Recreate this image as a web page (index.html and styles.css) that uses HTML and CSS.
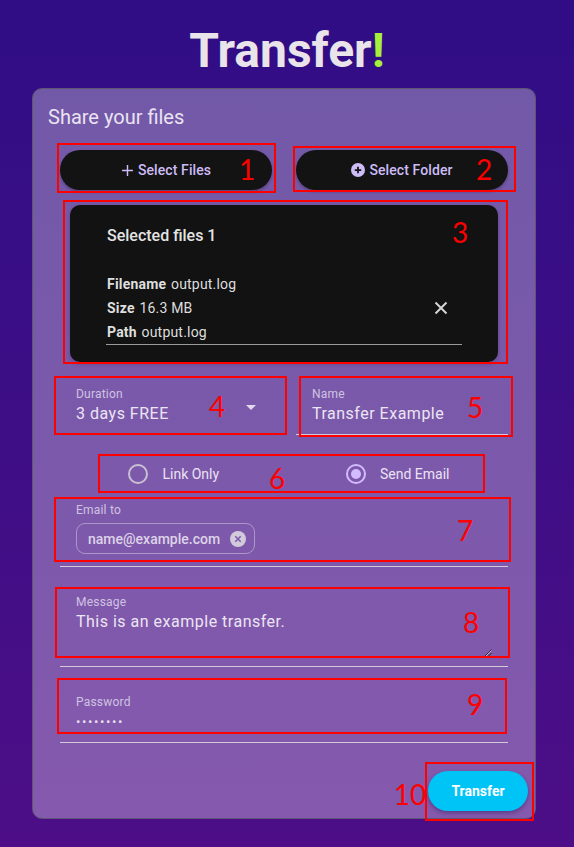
FILE: index.html
```html
<!DOCTYPE html>
<html lang="en">
<head>
<meta charset="utf-8">
<title>Transfer!</title>
<link rel="stylesheet" href="styles.css">
</head>
<body>
<h1 class="title">Transfer<span class="bang">!</span></h1>
<main class="card">
  <h2 class="card-title">Share your files</h2>
  <div class="content">
    <div class="btn-row">
      <button class="pill">
        <svg class="pill-icon" viewBox="0 0 24 24" width="13" height="13"><path d="M12 2v20M2 12h20" stroke="#cdbcf6" stroke-width="2.6" fill="none"/></svg>
        <span>Select Files</span>
      </button>
      <button class="pill">
        <svg class="pill-icon" viewBox="0 0 24 24" width="14" height="14"><circle cx="12" cy="12" r="12" fill="#cdbcf6"/><path d="M12 6.5v11M6.5 12h11" stroke="#131313" stroke-width="3" fill="none"/></svg>
        <span>Select Folder</span>
      </button>
    </div>

    <section class="files">
      <div class="files-head">Selected files 1</div>
      <div class="files-item">
        <div class="files-info">
          <div class="info-row"><b>Filename</b> output.log</div>
          <div class="info-row"><b>Size</b> 16.3 MB</div>
          <div class="info-row"><b>Path</b> output.log</div>
        </div>
        <svg class="remove" viewBox="0 0 14 14" width="14" height="14"><path d="M1.5 1.5l11 11M12.5 1.5l-11 11" stroke="#d4d4d4" stroke-width="2" fill="none"/></svg>
      </div>
    </section>

    <div class="grid2">
      <div class="field select">
        <div class="field-body">
          <div class="label">Duration</div>
          <div class="value">3 days FREE</div>
        </div>
        <span class="caret"></span>
      </div>
      <div class="field line">
        <div class="field-body">
          <div class="label">Name</div>
          <div class="value">Transfer Example</div>
        </div>
      </div>
    </div>

    <div class="radios">
      <div class="radio">
        <span class="radio-box"><span class="ring"></span></span>
        <span class="radio-label">Link Only</span>
      </div>
      <div class="radio checked">
        <span class="radio-box"><span class="ring"><span class="dot"></span></span></span>
        <span class="radio-label">Send Email</span>
      </div>
    </div>

    <div class="field line email">
      <div class="field-body">
        <div class="label">Email to</div>
        <div class="chip">
          <span>name@example.com</span>
          <svg class="chip-close" viewBox="0 0 16 16" width="16" height="16"><circle cx="8" cy="8" r="8" fill="#d3cadb"/><path d="M5.3 5.3l5.4 5.4M10.7 5.3l-5.4 5.4" stroke="#7d5dab" stroke-width="1.6" fill="none"/></svg>
        </div>
      </div>
    </div>

    <div class="field line message">
      <div class="field-body">
        <div class="label">Message</div>
        <div class="msg-box">
          <span class="value">This is an example transfer.</span>
          <svg class="grip" viewBox="0 0 8 8" width="8" height="8"><path d="M7.5 0.5L0.5 7.5M7.5 4L4 7.5" stroke="#2b2b2b" stroke-width="1" fill="none"/><path d="M7.5 1.5L1.5 7.5" stroke="#e0e0e0" stroke-width="0.7" fill="none"/></svg>
        </div>
      </div>
    </div>

    <div class="field line password">
      <div class="field-body">
        <div class="label">Password</div>
        <div class="value dots">••••••••</div>
      </div>
    </div>

    <div class="actions">
      <button class="send">Transfer</button>
    </div>
  </div>
</main>

<div class="marks">
  <div class="box b1"></div><span class="num n1">1</span>
  <div class="box b2"></div><span class="num n2">2</span>
  <div class="box b3"></div><span class="num n3">3</span>
  <div class="box b4"></div><span class="num n4">4</span>
  <div class="box b5"></div><span class="num n5">5</span>
  <div class="box b6"></div><span class="num n6">6</span>
  <div class="box b7"></div><span class="num n7">7</span>
  <div class="box b8"></div><span class="num n8">8</span>
  <div class="box b9"></div><span class="num n9">9</span>
  <div class="box b10"></div><span class="num n10">10</span>
</div>
</body>
</html>
```

FILE: styles.css
```css
* { box-sizing: border-box; }

html, body {
  margin: 0;
  padding: 0;
}

body {
  position: relative;
  width: 574px;
  min-height: 847px;
  background: linear-gradient(to bottom, #300d85 0%, #3d0e86 50%, #4d0e87 100%);
  font-family: Roboto, "Noto Sans", sans-serif;
  overflow: hidden;
}

.title {
  margin: 0 0 13px;
  padding-top: 27px;
  height: 75px;
  font-size: 48px;
  line-height: 48px;
  font-weight: 700;
  text-align: center;
  color: #e9e3ea;
}

.bang { color: #a6f03a; }

.card {
  margin-left: 32px;
  width: 504px;
  border: 1px solid #5d5672;
  border-radius: 10px;
  background: linear-gradient(to bottom, #7259a8 0%, #8559ad 100%);
}

.card-title {
  margin: 0;
  padding: 14px 15px 0;
  font-size: 20px;
  line-height: 28px;
  font-weight: 400;
  color: #ebe3f1;
}

.content {
  padding: 0 27px 7px;
}

.btn-row {
  margin-top: 19px;
  display: grid;
  grid-template-columns: 1fr 1fr;
  gap: 24px;
}

.pill {
  height: 40px;
  border: none;
  border-radius: 20px;
  background: #131313;
  box-shadow: 0 2px 3px rgba(0,0,0,0.25);
  display: flex;
  align-items: center;
  justify-content: center;
  gap: 4px;
  font-family: Roboto, sans-serif;
  font-size: 14px;
  font-weight: 500;
  letter-spacing: 0.1px;
  color: #cdbcf6;
  padding: 0;
}

.pill-icon { display: block; }

.files {
  margin: 15px 10px 0;
  padding: 19px 36px 17px;
  background: #121212;
  border-radius: 10px;
  box-shadow: 0 2px 4px rgba(0,0,0,0.2);
}

.files-head {
  padding-left: 1px;
  font-size: 16px;
  line-height: 24px;
  font-weight: 500;
  color: #e4e4e4;
}

.files-item {
  margin-top: 24px;
  display: flex;
  align-items: center;
  justify-content: space-between;
  padding-right: 14px;
  border-bottom: 1px solid #9a9a9a;
}

.info-row {
  padding-left: 1px;
  font-size: 14px;
  line-height: 24px;
  letter-spacing: 0.2px;
  color: #dedede;
}

.info-row b {
  font-weight: 700;
  margin-right: 1px;
}

.remove { display: block; }

.grid2 {
  margin-top: 16px;
  display: grid;
  grid-template-columns: 1fr 1fr;
  gap: 24px;
}

.field {
  padding: 8px 16px 8px;
  border-bottom: 1px solid transparent;
}

.field.line { border-bottom-color: #d3cadc; }

.field.select {
  display: flex;
  align-items: center;
  justify-content: space-between;
}

.label {
  font-size: 12px;
  line-height: 16px;
  color: #d0c3e2;
  letter-spacing: 0.2px;
}

.value {
  font-size: 16px;
  line-height: 24px;
  color: #ece5f3;
  letter-spacing: 0.5px;
}

.caret {
  width: 0;
  height: 0;
  border-left: 5px solid transparent;
  border-right: 5px solid transparent;
  border-top: 5px solid #e2d9ec;
  margin-top: 2px;
}

.radios {
  margin-top: 19px;
  height: 40px;
  display: flex;
  justify-content: space-around;
  align-items: center;
}

.radio {
  display: flex;
  align-items: center;
}

.radio-box {
  width: 40px;
  height: 40px;
  display: flex;
  align-items: center;
  justify-content: center;
}

.ring {
  width: 20px;
  height: 20px;
  border-radius: 50%;
  border: 2px solid #c9c0d3;
  display: flex;
  align-items: center;
  justify-content: center;
}

.radio.checked .ring { border-color: #d2bcff; }

.dot {
  width: 10px;
  height: 10px;
  border-radius: 50%;
  background: #d2bcff;
}

.radio-label {
  margin-left: 4px;
  font-size: 14px;
  line-height: 20px;
  color: #ebe3f3;
}

.email { padding-bottom: 12px; }

.chip {
  margin-top: 5px;
  height: 31px;
  display: inline-flex;
  align-items: center;
  gap: 10px;
  padding: 0 8px 0 11px;
  border: 1px solid rgba(220, 210, 232, 0.5);
  border-radius: 9px;
  font-size: 14px;
  font-weight: 500;
  color: #ddd3e8;
}

.chip-close { display: block; }

.message, .password { margin-top: 19px; }

.msg-box {
  height: 48px;
  display: flex;
  justify-content: space-between;
  align-items: flex-start;
}

.grip {
  align-self: flex-end;
  display: block;
  margin-bottom: 1px;
}

.dots {
  font-size: 13px;
  letter-spacing: 1.6px;
  color: #e6def0;
}

.actions {
  margin-top: 28px;
  display: flex;
  justify-content: flex-end;
  margin-right: -20px;
}

.send {
  width: 100px;
  height: 40px;
  border: none;
  border-radius: 20px;
  background: #00c3f6;
  box-shadow: 0 2px 4px rgba(40, 20, 80, 0.45);
  font-family: Roboto, sans-serif;
  font-size: 14px;
  font-weight: 700;
  color: #ffffff;
}

/* annotation overlay */
.marks {
  position: absolute;
  inset: 0;
  pointer-events: none;
}

.box {
  position: absolute;
  border: 2px solid #ff0000;
}

.b1 { left: 57px; top: 143px; width: 219px; height: 50px; }
.b2 { left: 293px; top: 146px; width: 223px; height: 46px; }
.b3 { left: 63px; top: 200px; width: 445px; height: 164px; }
.b4 { left: 54px; top: 376px; width: 233px; height: 59px; }
.b5 { left: 299px; top: 376px; width: 214px; height: 61px; }
.b6 { left: 98px; top: 454px; width: 387px; height: 39px; }
.b7 { left: 54px; top: 497px; width: 457px; height: 65px; }
.b8 { left: 55px; top: 587px; width: 455px; height: 71px; }
.b9 { left: 57px; top: 678px; width: 450px; height: 56px; }
.b10 { left: 425px; top: 762px; width: 109px; height: 59px; }

.num {
  position: absolute;
  transform: translate(-50%, -50%);
  font-family: Lato, "Open Sans", sans-serif;
  font-size: 28px;
  line-height: 28px;
  color: #ff0000;
}

.n1 { left: 247px; top: 169px; }
.n2 { left: 484px; top: 169px; }
.n3 { left: 460px; top: 232px; }
.n4 { left: 217px; top: 406px; }
.n5 { left: 475px; top: 407px; }
.n6 { left: 277px; top: 478px; }
.n7 { left: 465px; top: 530px; }
.n8 { left: 471px; top: 622px; }
.n9 { left: 475px; top: 704px; }
.n10 { left: 410px; top: 794px; }
```
